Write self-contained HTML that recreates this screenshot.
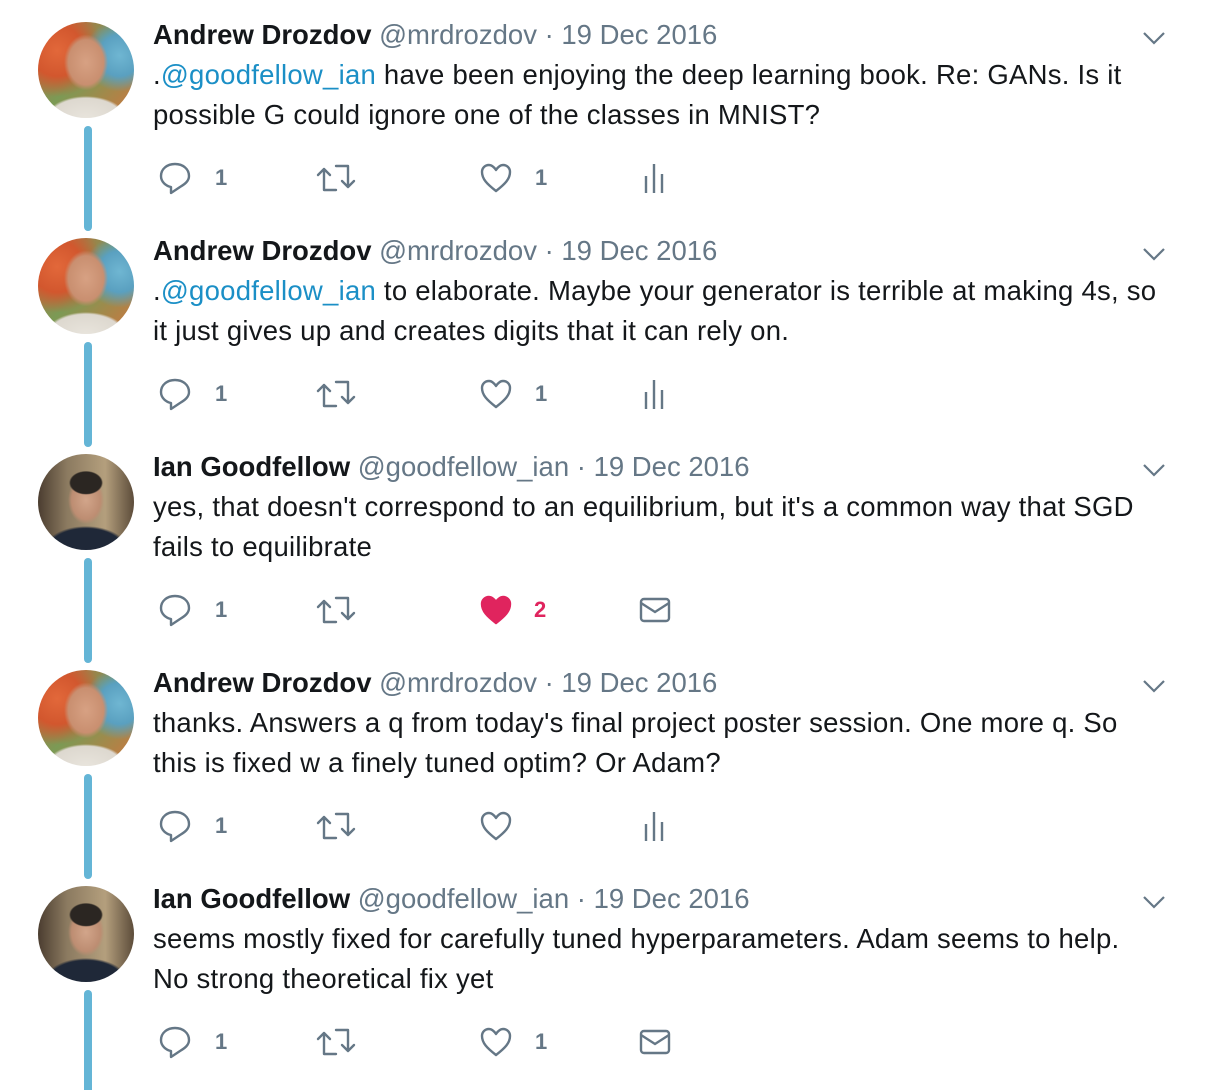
<!DOCTYPE html>
<html><head><meta charset="utf-8"><style>
body{margin:0;width:1220px;height:1080px;background:#fff;position:relative;overflow:hidden;font-family:"Liberation Sans",Arial,sans-serif;}
.t{position:absolute;left:0;width:1220px;height:216px;}
.av{position:absolute;left:38px;top:22px;width:96px;height:96px;border-radius:50%;overflow:hidden;}
.a1{background:radial-gradient(ellipse 22px 28px at 50% 42%,#d7a183 0,#c98f70 80%,transparent 100%),radial-gradient(ellipse 40px 22px at 50% 100%,#e8e4dc 0,#ddd8cf 90%,transparent 100%),radial-gradient(circle at 85% 35%,#6fb6d2 0,#5aa0c0 20%,transparent 35%),radial-gradient(circle at 20% 30%,#e2683a 0,#d2572e 25%,transparent 45%),linear-gradient(135deg,#c7623a,#7b9a55 50%,#d1743e);}
.a2{background:radial-gradient(ellipse 17px 12px at 50% 30%,#2b2622 0,#2b2622 90%,transparent 100%),radial-gradient(ellipse 18px 24px at 50% 48%,#d2a58a 0,#bd8d72 80%,transparent 100%),radial-gradient(ellipse 42px 24px at 50% 100%,#1f2838 0,#1f2838 90%,transparent 100%),linear-gradient(90deg,#4b3d30,#8b7a60 30%,#b49f7d 70%,#5c4c3a);}
.ln{position:absolute;left:84px;top:126px;width:8px;height:105px;border-radius:4px;background:#64b5d6;}
.nm{position:absolute;left:153px;top:15px;font-size:27.5px;line-height:40px;color:#14171a;white-space:nowrap;}
.nm b{font-weight:bold;}
.nm span{color:#657786;}
.tx{position:absolute;left:153px;top:55px;width:1060px;font-size:27.5px;line-height:40px;color:#14171a;white-space:nowrap;letter-spacing:0.25px;}
.tx a{color:#1b8fc6;text-decoration:none;}
.ch{position:absolute;left:1142px;top:30px;}
.ic{position:absolute;top:160px;}
.cn{position:absolute;top:164px;font-size:22px;font-weight:bold;color:#657786;line-height:28px;}
</style></head><body>

<div class="t" style="top:0">
<div class="av a1"></div><div class="ln"></div>
<div class="nm"><b>Andrew Drozdov</b> <span>@mrdrozdov · 19 Dec 2016</span></div>
<div class="tx">.<a>@goodfellow_ian</a> have been enjoying the deep learning book. Re: GANs. Is it<br>possible G could ignore one of the classes in MNIST?</div>
<svg class="ch" width="24" height="16" viewBox="0 0 24 16"><path d="M2 3l10 10 10-10" fill="none" stroke="#657786" stroke-width="2.2"/></svg>
<svg class="ic" style="left:158px" width="34" height="36" viewBox="0 0 34 36"><path d="M17 4C9 4 3 9 3 16c0 6 5 10 10 11v6l9-6c5-3 9-6 9-11C31 9 25 4 17 4z" fill="none" stroke="#657786" stroke-width="2.4" stroke-linejoin="round"/></svg>
<div class="cn" style="left:215px">1</div>
<svg class="ic" style="left:316px" width="40" height="36" viewBox="0 0 40 36"><path d="M8 30V9M2 15l6-6 6 6M8 30h12M32 6v21M26 21l6 6 6-6M32 6H20" fill="none" stroke="#657786" stroke-width="2.4" stroke-linejoin="round" stroke-linecap="round"/></svg>
<svg class="ic" style="left:479px" width="34" height="36" viewBox="0 0 34 36"><path d="M17 31C8 24 3 19 3 12c0-4 3-7 7-7 3 0 5 2 7 5 2-3 4-5 7-5 4 0 7 3 7 7 0 7-5 12-14 19z" fill="none" stroke="#657786" stroke-width="2.4" stroke-linejoin="round"/></svg>
<div class="cn" style="left:535px">1</div>
<svg class="ic" style="left:643px" width="24" height="36" viewBox="0 0 24 36"><path d="M3 16v17M11 4v29M19 14v19" stroke="#657786" stroke-width="2.4"/></svg>
</div>

<div class="t" style="top:216px">
<div class="av a1"></div><div class="ln"></div>
<div class="nm"><b>Andrew Drozdov</b> <span>@mrdrozdov · 19 Dec 2016</span></div>
<div class="tx">.<a>@goodfellow_ian</a> to elaborate. Maybe your generator is terrible at making 4s, so<br>it just gives up and creates digits that it can rely on.</div>
<svg class="ch" width="24" height="16" viewBox="0 0 24 16"><path d="M2 3l10 10 10-10" fill="none" stroke="#657786" stroke-width="2.2"/></svg>
<svg class="ic" style="left:158px" width="34" height="36" viewBox="0 0 34 36"><path d="M17 4C9 4 3 9 3 16c0 6 5 10 10 11v6l9-6c5-3 9-6 9-11C31 9 25 4 17 4z" fill="none" stroke="#657786" stroke-width="2.4" stroke-linejoin="round"/></svg>
<div class="cn" style="left:215px">1</div>
<svg class="ic" style="left:316px" width="40" height="36" viewBox="0 0 40 36"><path d="M8 30V9M2 15l6-6 6 6M8 30h12M32 6v21M26 21l6 6 6-6M32 6H20" fill="none" stroke="#657786" stroke-width="2.4" stroke-linejoin="round" stroke-linecap="round"/></svg>
<svg class="ic" style="left:479px" width="34" height="36" viewBox="0 0 34 36"><path d="M17 31C8 24 3 19 3 12c0-4 3-7 7-7 3 0 5 2 7 5 2-3 4-5 7-5 4 0 7 3 7 7 0 7-5 12-14 19z" fill="none" stroke="#657786" stroke-width="2.4" stroke-linejoin="round"/></svg>
<div class="cn" style="left:535px">1</div>
<svg class="ic" style="left:643px" width="24" height="36" viewBox="0 0 24 36"><path d="M3 16v17M11 4v29M19 14v19" stroke="#657786" stroke-width="2.4"/></svg>
</div>

<div class="t" style="top:432px">
<div class="av a2"></div><div class="ln"></div>
<div class="nm"><b>Ian Goodfellow</b> <span>@goodfellow_ian · 19 Dec 2016</span></div>
<div class="tx">yes, that doesn't correspond to an equilibrium, but it's a common way that SGD<br>fails to equilibrate</div>
<svg class="ch" width="24" height="16" viewBox="0 0 24 16"><path d="M2 3l10 10 10-10" fill="none" stroke="#657786" stroke-width="2.2"/></svg>
<svg class="ic" style="left:158px" width="34" height="36" viewBox="0 0 34 36"><path d="M17 4C9 4 3 9 3 16c0 6 5 10 10 11v6l9-6c5-3 9-6 9-11C31 9 25 4 17 4z" fill="none" stroke="#657786" stroke-width="2.4" stroke-linejoin="round"/></svg>
<div class="cn" style="left:215px">1</div>
<svg class="ic" style="left:316px" width="40" height="36" viewBox="0 0 40 36"><path d="M8 30V9M2 15l6-6 6 6M8 30h12M32 6v21M26 21l6 6 6-6M32 6H20" fill="none" stroke="#657786" stroke-width="2.4" stroke-linejoin="round" stroke-linecap="round"/></svg>
<svg class="ic" style="left:479px" width="34" height="36" viewBox="0 0 34 36"><path d="M17 31C8 24 3 19 3 12c0-4 3-7 7-7 3 0 5 2 7 5 2-3 4-5 7-5 4 0 7 3 7 7 0 7-5 12-14 19z" fill="#e0245e" stroke="#e0245e" stroke-width="2.4" stroke-linejoin="round"/></svg>
<div class="cn" style="left:534px;color:#e0245e">2</div>
<svg class="ic" style="left:638px" width="34" height="36" viewBox="0 0 34 36"><rect x="3" y="7" width="28" height="22" rx="3" fill="none" stroke="#657786" stroke-width="2.4"/><path d="M3 11l14 9 14-9" fill="none" stroke="#657786" stroke-width="2.4"/></svg>
</div>

<div class="t" style="top:648px">
<div class="av a1"></div><div class="ln"></div>
<div class="nm"><b>Andrew Drozdov</b> <span>@mrdrozdov · 19 Dec 2016</span></div>
<div class="tx">thanks. Answers a q from today's final project poster session. One more q. So<br>this is fixed w a finely tuned optim? Or Adam?</div>
<svg class="ch" width="24" height="16" viewBox="0 0 24 16"><path d="M2 3l10 10 10-10" fill="none" stroke="#657786" stroke-width="2.2"/></svg>
<svg class="ic" style="left:158px" width="34" height="36" viewBox="0 0 34 36"><path d="M17 4C9 4 3 9 3 16c0 6 5 10 10 11v6l9-6c5-3 9-6 9-11C31 9 25 4 17 4z" fill="none" stroke="#657786" stroke-width="2.4" stroke-linejoin="round"/></svg>
<div class="cn" style="left:215px">1</div>
<svg class="ic" style="left:316px" width="40" height="36" viewBox="0 0 40 36"><path d="M8 30V9M2 15l6-6 6 6M8 30h12M32 6v21M26 21l6 6 6-6M32 6H20" fill="none" stroke="#657786" stroke-width="2.4" stroke-linejoin="round" stroke-linecap="round"/></svg>
<svg class="ic" style="left:479px" width="34" height="36" viewBox="0 0 34 36"><path d="M17 31C8 24 3 19 3 12c0-4 3-7 7-7 3 0 5 2 7 5 2-3 4-5 7-5 4 0 7 3 7 7 0 7-5 12-14 19z" fill="none" stroke="#657786" stroke-width="2.4" stroke-linejoin="round"/></svg>
<svg class="ic" style="left:643px" width="24" height="36" viewBox="0 0 24 36"><path d="M3 16v17M11 4v29M19 14v19" stroke="#657786" stroke-width="2.4"/></svg>
</div>

<div class="t" style="top:864px">
<div class="av a2"></div><div class="ln" style="height:100px;border-radius:4px 4px 0 0"></div>
<div class="nm"><b>Ian Goodfellow</b> <span>@goodfellow_ian · 19 Dec 2016</span></div>
<div class="tx">seems mostly fixed for carefully tuned hyperparameters. Adam seems to help.<br>No strong theoretical fix yet</div>
<svg class="ch" width="24" height="16" viewBox="0 0 24 16"><path d="M2 3l10 10 10-10" fill="none" stroke="#657786" stroke-width="2.2"/></svg>
<svg class="ic" style="left:158px" width="34" height="36" viewBox="0 0 34 36"><path d="M17 4C9 4 3 9 3 16c0 6 5 10 10 11v6l9-6c5-3 9-6 9-11C31 9 25 4 17 4z" fill="none" stroke="#657786" stroke-width="2.4" stroke-linejoin="round"/></svg>
<div class="cn" style="left:215px">1</div>
<svg class="ic" style="left:316px" width="40" height="36" viewBox="0 0 40 36"><path d="M8 30V9M2 15l6-6 6 6M8 30h12M32 6v21M26 21l6 6 6-6M32 6H20" fill="none" stroke="#657786" stroke-width="2.4" stroke-linejoin="round" stroke-linecap="round"/></svg>
<svg class="ic" style="left:479px" width="34" height="36" viewBox="0 0 34 36"><path d="M17 31C8 24 3 19 3 12c0-4 3-7 7-7 3 0 5 2 7 5 2-3 4-5 7-5 4 0 7 3 7 7 0 7-5 12-14 19z" fill="none" stroke="#657786" stroke-width="2.4" stroke-linejoin="round"/></svg>
<div class="cn" style="left:535px">1</div>
<svg class="ic" style="left:638px" width="34" height="36" viewBox="0 0 34 36"><rect x="3" y="7" width="28" height="22" rx="3" fill="none" stroke="#657786" stroke-width="2.4"/><path d="M3 11l14 9 14-9" fill="none" stroke="#657786" stroke-width="2.4"/></svg>
</div>

</body></html>
